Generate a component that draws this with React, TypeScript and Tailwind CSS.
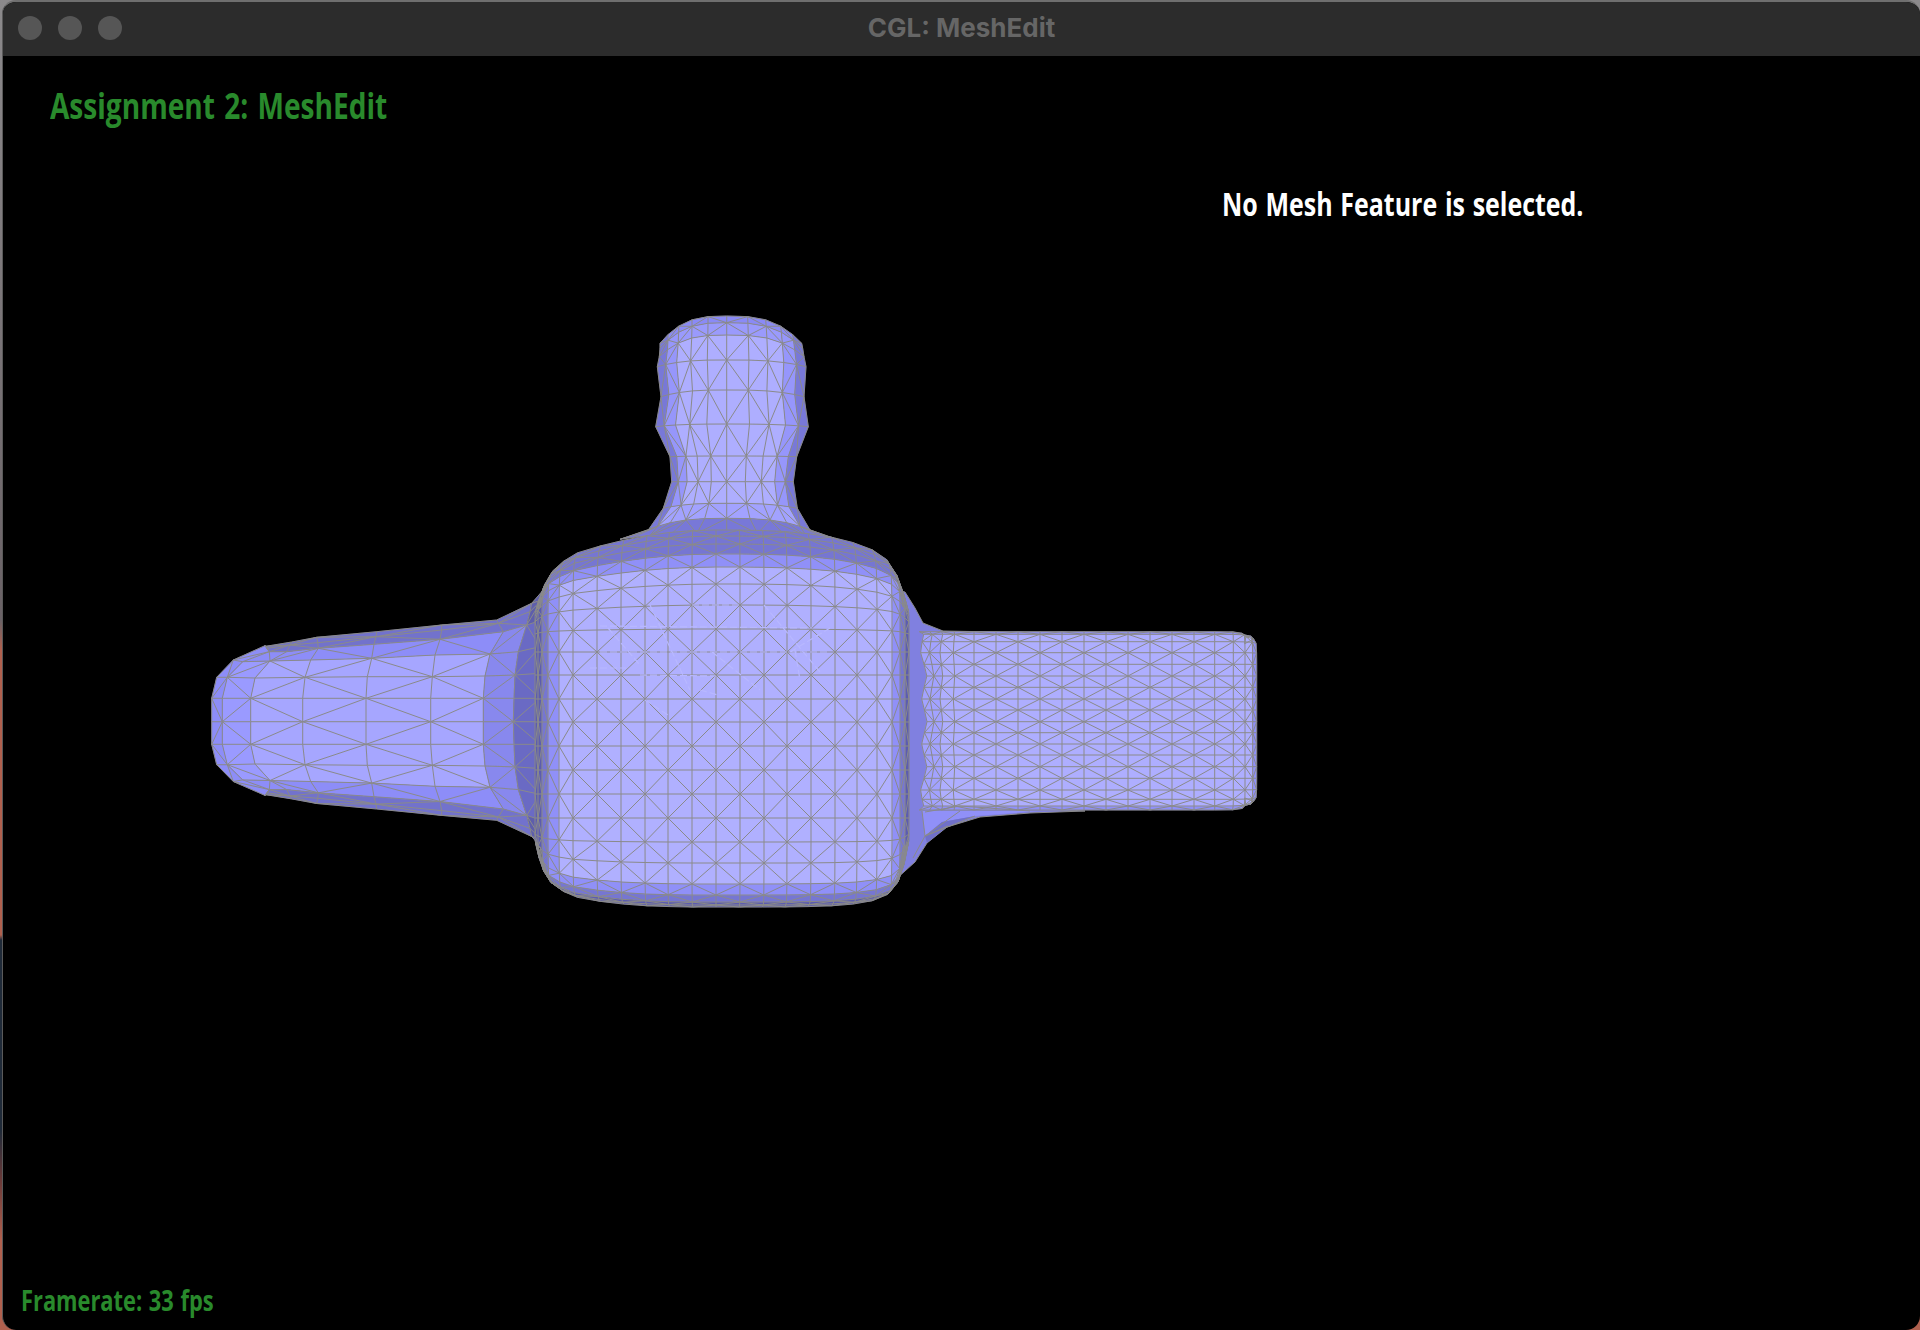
type Pt = [number, number];

const LINE = "#8a8a8a";
const SHADES = ["#b0b0ff", "#9090f8", "#7676d2", "#5c5cb0"];

// one surface patch of the mesh: vertices from at(i, j), each cell split in two triangles
function buildPatch(
  cols: number,
  rows: number,
  at: (i: number, j: number) => Pt,
  shade: (i: number, j: number) => string,
  flip: (i: number, j: number) => boolean,
) {
  const fills: Record<string, string> = {};
  let lines = "";
  const p = (q: Pt) => `${q[0].toFixed(1)} ${q[1].toFixed(1)}`;
  for (let i = 0; i < cols; i++) {
    for (let j = 0; j < rows; j++) {
      const a = at(i, j);
      const b = at(i + 1, j);
      const c = at(i + 1, j + 1);
      const d = at(i, j + 1);
      const col = shade(i, j);
      fills[col] = (fills[col] || "") + `M${p(a)}L${p(b)}L${p(c)}L${p(d)}Z`;
      lines += `M${p(a)}L${p(b)}M${p(a)}L${p(d)}`;
      if (i === cols - 1) lines += `M${p(b)}L${p(c)}`;
      if (j === rows - 1) lines += `M${p(d)}L${p(c)}`;
      lines += flip(i, j) ? `M${p(a)}L${p(c)}` : `M${p(b)}L${p(d)}`;
    }
  }
  return { fills, lines };
}

function Patch({ patch }: { patch: ReturnType<typeof buildPatch> }) {
  return (
    <g>
      {Object.entries(patch.fills).map(([col, d]) => (
        <path key={col} d={d} fill={col} stroke={col} strokeWidth={0.4} />
      ))}
      <path d={patch.lines} fill="none" stroke={LINE} strokeWidth={1} />
    </g>
  );
}

/* ---------- body ---------- */
const BX = 716;
const BY = 722;
const XR = [0, 24, 48, 71, 95, 119, 141, 161, 176, 184, 189, 193];
const XL = [0, 24, 48, 71, 95, 119, 143, 157, 168, 174, 178, 181];
const YT = [0, 23, 47, 70, 93, 117, 138, 155, 168, 178, 186, 192];
const YB = [0, 24, 48, 72, 96, 120, 141, 162, 173, 180, 183, 185];
// how far up each row ends at the side of the body, this is what rounds the corners
const ET = [0, 23, 47, 70, 88, 100, 106, 110, 112, 113, 114, 115];
const EB = [0, 24, 48, 72, 96, 112, 118, 120, 122, 123, 124, 125];

const bodyAt = (ci: number, cj: number): Pt => {
  const i = ci - 11;
  const j = cj - 11;
  const k = Math.abs(j);
  const u = Math.abs(i) / 11;
  const ox = i < 0 ? -XL[-i] : XR[i];
  // the right corners are squarer than the left ones
  const oy =
    j < 0
      ? -YT[k] + (YT[k] - ET[k]) * Math.pow(u, i < 0 ? 2 : 3)
      : YB[k] - (YB[k] - EB[k]) * Math.pow(u, i < 0 ? 3 : 5);
  const squeezeX = 0.03 * Math.pow(k / 11, 6);
  return [BX + ox * (1 - squeezeX), BY + oy];
};

const ringLevel = (k: number, left: boolean) => {
  if (left) return k >= 9 ? 3 : k === 8 ? 2 : k === 7 ? 1 : 0;
  return k >= 10 ? 3 : k === 9 ? 2 : k === 8 ? 1 : 0;
};

const bodyPatch = buildPatch(
  22,
  22,
  bodyAt,
  (ci, cj) => {
    const i = ci - 11;
    const j = cj - 11;
    const li = i < 0 ? ringLevel(-i - 1, true) : ringLevel(i, false);
    const jk = j < 0 ? -j - 1 : j;
    const lj = j < 0 ? (jk >= 8 ? 2 : jk === 7 ? 1 : 0) : jk >= 9 ? 3 : jk === 8 ? 2 : jk === 7 ? 1 : 0;
    return SHADES[Math.max(li, lj)];
  },
  (ci, cj) => (ci + cj) % 2 === 0,
);

/* ---------- left arm, points read off the reference, top half only ---------- */
const ARM: Pt[][] = [
  [[65, 425], [65, 355], [80, 292], [130, 240], [225, 197], [225, 197], [225, 197]],
  [[97, 425], [97, 355], [112, 292], [158, 245], [238, 215], [232, 205], [228, 199]],
  [[182, 425], [182, 355], [195, 294], [240, 243], [290, 215], [300, 195], [305, 186]],
  [[338, 425], [338, 355], [345, 292], [362, 240], [385, 205], [383, 188], [380, 172]],
  [[528, 425], [528, 355], [532, 290], [545, 235], [552, 193], [558, 170], [560, 155]],
  [[722, 425], [722, 355], [727, 290], [735, 225], [750, 178], [755, 150], [755, 135]],
  [[880, 425], [880, 355], [885, 288], [900, 222], [940, 155], [925, 130], [920, 120]],
  [[970, 425], [972, 355], [975, 285], [985, 215], [1010, 135], [1020, 95], [1025, 70]],
  [[1050, 425], [1050, 355], [1050, 280], [1050, 200], [1055, 120], [1055, 60], [1060, 30]],
];

const armAt = (c: number, cr: number): Pt => {
  const r = cr - 6;
  const q = ARM[c][Math.abs(r)];
  const y = r <= 0 ? q[1] : 425 + (425 - q[1]) * 0.97;
  return [190 + q[0] / 3, 580 + y / 3];
};

const armPatch = buildPatch(
  8,
  12,
  armAt,
  (c, cr) => {
    const r = cr < 6 ? 5 - cr : cr - 6;
    if (c === 7) return r >= 4 ? "#5e5eac" : "#6a6ac4";
    if (r >= 4) return "#7272cc";
    if (c === 6) return "#8888ee";
    if (r === 3) return "#8d8df8";
    if (c === 0) return "#8d8df8";
    if (c === 1) return "#9a9aff";
    return "#a6a6ff";
  },
  (c, cr) => {
    const r = cr < 6 ? 5 - cr : cr - 6;
    return cr < 6 ? (c + r) % 2 === 0 : (c + r) % 2 === 1;
  },
);

/* ---------- right arm ---------- */
const RX = [125, 150, 180, 220, 282, 348, 414, 480, 546, 612, 678, 744, 810, 876, 942, 1004, 1060, 1095, 1118, 1130];
const RY = [95, 103, 125, 158, 193, 228, 262, 297, 330, 365, 398, 432, 465, 500, 535, 570, 598, 618, 630];

const rightAt = (i: number, j: number): Pt => {
  const v = (j - 9) / 9;
  const a = Math.abs(v);
  const wave = i < 4 ? (4 - i) * 4 * (Math.cos(v * 14) * 0.5 + 0.5) : 0;
  const flare = i < 2 ? (2 - i) * 8 * Math.pow(a, 4) : 0;
  const t = i > 15 ? (i - 15) / 4 : 0;
  const x = RX[i] + wave - flare - 36 * t * t * Math.pow(a, 12);
  const y = RY[j] - Math.sign(v) * 36 * t * t * t * Math.pow(a, 8);
  return [880 + x / 3, 600 + y / 3];
};

const rightPatch = buildPatch(
  RX.length - 1,
  RY.length - 1,
  rightAt,
  (i, j) => {
    if (j === 0 || j === RY.length - 2 || i === RX.length - 2) return "#9090f8";
    if (i < 2) return "#a2a2ff";
    return "#aeaeff";
  },
  (i, j) => (i + j) % 2 === 0,
);

/* ---------- head ---------- */
const HEAD_ROWS = [
  [48, 130, 200, 225],
  [68, 145, 200, 228],
  [105, 170, 202, 232],
  [180, 200, 208, 238],
  [270, 290, 197, 232],
  [372, 380, 213, 245],
  [468, 470, 170, 210],
  [545, 545, 165, 200],
  [610, 625, 190, 212],
  [655, 690, 235, 250],
  [700, 718, 320, 330],
];
const HEAD_O = [0, 0.28, 0.52, 0.72, 0.88, 1];

const headAt = (ci: number, r: number): Pt => {
  const c = ci - 5;
  const row = HEAD_ROWS[r];
  const o = HEAD_O[Math.abs(c)];
  const w = c < 0 ? row[2] : row[3];
  const y = row[0] + (row[1] - row[0]) * Math.pow(o, 3);
  const x = 320 + (c < 0 ? -1 : 1) * w * o;
  return [620 + x / 3, 300 + y / 3];
};

const headPatch = buildPatch(
  10,
  10,
  headAt,
  (ci, r) => {
    const k = ci < 5 ? 4 - ci : ci - 5;
    if (r === 9) return "#7878d8";
    if (k === 4) return "#7878d8";
    if (r === 8) return "#a2a2ff";
    if (r === 0) return "#8a8af6";
    if (k === 3) return "#9696fb";
    if (r === 1) return "#9a9afc";
    return "#aeaeff";
  },
  (ci, r) => (ci + r) % 2 === 0,
);

/* ---------- pieces that sit under the triangulated patches ---------- */
const RIGHT_NECK =
  "M895 590L905 592L915 608L923 623L943 631L1000 632L1000 806L1085 811L1030 813L980 817L947 827L927 843L915 862L895 880L895 850Z";
const NECK_MID = "M922 811L1040 811L975 816L942 822L925 836Z";
const NECK_DARK = "M925 836L942 822L975 816L947 827L927 843Z";
const NECK_LINES = "M925 812L960 806L1030 811M925 836L948 826M925 836L975 816M922 811L925 836M925 836L913 858M960 811L925 836";

// z-fighting speckle at the top of the body, drawn as broken light lines over the grid
const SPECKLE =
  "M600 626L812 628M608 628L640 665M650 605L690 690M692 605L740 605M600 652L830 652M590 668L626 668M712 652L760 690M790 652L830 628M795 650L800 680M764 605L820 672M640 675L716 676M645 700L668 715M700 690L718 695";

function Mesh() {
  return (
    <svg width={1920} height={1330} viewBox="0 0 1920 1330" className="absolute left-0 top-0">
      <path d={RIGHT_NECK} fill="#8080e0" stroke={LINE} strokeWidth={1} />
      <Patch patch={rightPatch} />
      <path d={NECK_MID} fill="#9090f8" />
      <path d={NECK_DARK} fill="#7070c8" />
      <path d={NECK_LINES} fill="none" stroke={LINE} strokeWidth={1} />
      <Patch patch={armPatch} />
      <Patch patch={headPatch} />
      <Patch patch={bodyPatch} />
      <path d={SPECKLE} fill="none" stroke="#b8b8ff" strokeWidth={1.2} strokeDasharray="7 3" />
    </svg>
  );
}

export default function App() {
  return (
    <div className="h-[1330px] w-[1920px] overflow-hidden bg-[linear-gradient(180deg,#8c8a8c_0px,#6a6266_620px,#b0604e_650px,#b0604e_935px,#1f2a38_940px,#1f2a38_1130px,#6a3a38_1180px,#b0604e_1240px,#b0604e_1330px)] pl-[2px]">
      <div className="relative flex h-full flex-col overflow-hidden rounded-[14px] border-l-[1px] border-t-[2px] border-l-[#5a5a5a] border-t-[#6f6f6f] bg-black">
        <header className="relative z-10 flex h-[54px] shrink-0 items-center bg-[#2c2c2c] pb-[2px] pl-[15px]">
          <div className="flex gap-[16px]">
            <span className="h-[24px] w-[24px] rounded-full bg-[#565656]" />
            <span className="h-[24px] w-[24px] rounded-full bg-[#565656]" />
            <span className="h-[24px] w-[24px] rounded-full bg-[#565656]" />
          </div>
          <h1 className="absolute inset-x-0 pb-[2px] text-center font-['Inter',sans-serif] text-[26px] font-bold text-[#666666]">
            CGL: MeshEdit
          </h1>
        </header>
        <main className="relative flex-1">
          <div className="absolute left-[-3px] top-[-56px]">
            <Mesh />
          </div>
          <p className="absolute left-[47px] top-[32px] origin-left scale-x-[0.78] whitespace-nowrap font-['Open_Sans',sans-serif] text-[36px] font-bold leading-none text-[#298a2c] [word-spacing:2.5px]">
            Assignment 2: MeshEdit
          </p>
          <p className="absolute left-[1219px] top-[132px] origin-left scale-x-[0.78] whitespace-nowrap font-['Open_Sans',sans-serif] text-[32px] font-bold leading-none text-white [word-spacing:1.6px]">
            No Mesh Feature is selected.
          </p>
          <p className="absolute left-[18px] top-[1230px] origin-left scale-x-[0.78] whitespace-nowrap font-['Open_Sans',sans-serif] text-[28px] font-bold leading-none text-[#298a2c] [word-spacing:1.3px]">
            Framerate: 33 fps
          </p>
        </main>
      </div>
    </div>
  );
}
